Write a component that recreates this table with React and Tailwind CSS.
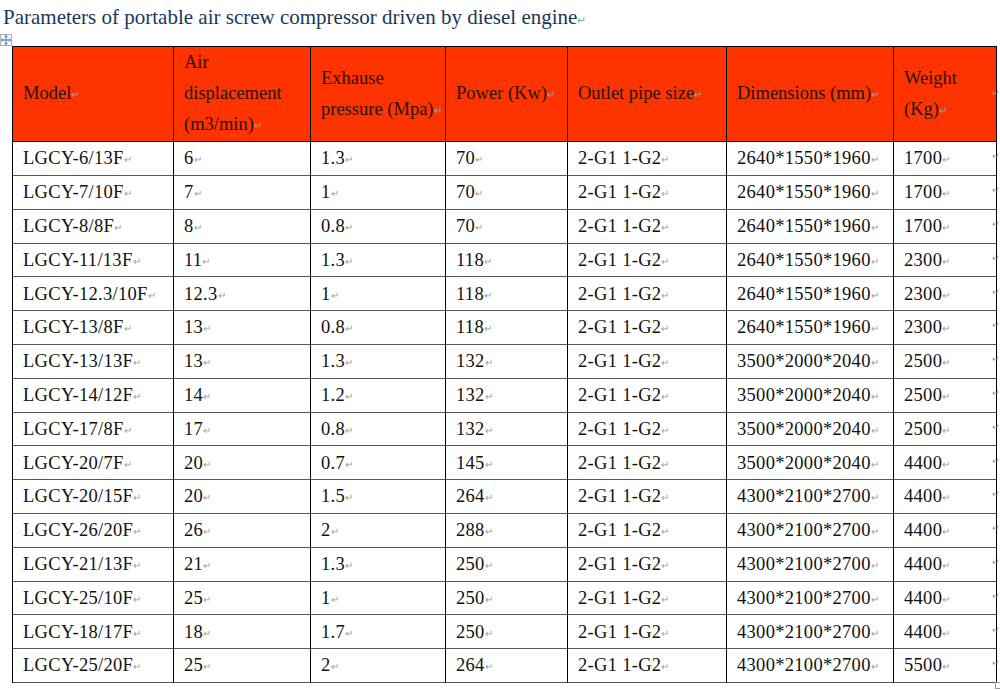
import React from "react";

const rows = [
  ["LGCY-6/13F", "6", "1.3", "70", "2640*1550*1960", "1700"],
  ["LGCY-7/10F", "7", "1", "70", "2640*1550*1960", "1700"],
  ["LGCY-8/8F", "8", "0.8", "70", "2640*1550*1960", "1700"],
  ["LGCY-11/13F", "11", "1.3", "118", "2640*1550*1960", "2300"],
  ["LGCY-12.3/10F", "12.3", "1", "118", "2640*1550*1960", "2300"],
  ["LGCY-13/8F", "13", "0.8", "118", "2640*1550*1960", "2300"],
  ["LGCY-13/13F", "13", "1.3", "132", "3500*2000*2040", "2500"],
  ["LGCY-14/12F", "14", "1.2", "132", "3500*2000*2040", "2500"],
  ["LGCY-17/8F", "17", "0.8", "132", "3500*2000*2040", "2500"],
  ["LGCY-20/7F", "20", "0.7", "145", "3500*2000*2040", "4400"],
  ["LGCY-20/15F", "20", "1.5", "264", "4300*2100*2700", "4400"],
  ["LGCY-26/20F", "26", "2", "288", "4300*2100*2700", "4400"],
  ["LGCY-21/13F", "21", "1.3", "250", "4300*2100*2700", "4400"],
  ["LGCY-25/10F", "25", "1", "250", "4300*2100*2700", "4400"],
  ["LGCY-18/17F", "18", "1.7", "250", "4300*2100*2700", "4400"],
  ["LGCY-25/20F", "25", "2", "264", "4300*2100*2700", "5500"],
];

// marca de párrafo de Word
const Mark = () => <span className="text-[10px] text-[#a0a0a0] align-middle">↵</span>;

const widths = ["w-[161px]", "w-[137px]", "w-[135px]", "w-[122px]", "w-[159px]", "w-[167px]", "w-[103px]"];

function HeadCell({ lines, i }) {
  return (
    <th className={`${widths[i]} border border-black bg-[#ff3300] pl-[10px] pr-0 text-left align-middle font-normal leading-[31px] text-[#2a1208]`}>
      {lines.map((l, k) => (
        <div key={k} className="whitespace-nowrap">
          {l}
          {k === lines.length - 1 && <Mark />}
        </div>
      ))}
    </th>
  );
}

const serif = "font-['Liberation_Serif','Times_New_Roman',serif]";

export default function App() {
  return (
    <div className={`relative min-h-[690px] w-[1000px] bg-white ${serif}`}>
      <div className={`h-[34px] pl-[3px] text-[21px] leading-[34px] text-[#1b365d] ${serif}`}>
        Parameters of portable air screw compressor driven by diesel engine
        <span className="text-[11px] text-[#a0a0a0]">↵</span>
      </div>

      {/* asa para mover la tabla */}
      <div className="absolute left-0 top-[34px] flex h-[12px] w-[12px] items-center justify-center border border-[#b0b0b0] bg-white">
        <svg width="10" height="10" viewBox="0 0 10 10" fill="none" stroke="#2a6fc0" strokeWidth="1">
          <path d="M5 0.5v9M0.5 5h9" />
          <path d="M3.5 2 5 0.5 6.5 2M3.5 8 5 9.5 6.5 8M2 3.5 0.5 5 2 6.5M8 3.5 9.5 5 8 6.5" />
        </svg>
      </div>

      <div className="relative ml-[12px] mt-[12px] w-[985px]">
        <table className={`table-fixed border-collapse text-[18.5px] ${serif}`}>
          <thead>
            <tr className="h-[94px]">
              <HeadCell i={0} lines={["Model"]} />
              <HeadCell i={1} lines={["Air", "displacement", "(m3/min)"]} />
              <HeadCell i={2} lines={["Exhause", "pressure (Mpa)"]} />
              <HeadCell i={3} lines={["Power (Kw)"]} />
              <HeadCell i={4} lines={["Outlet pipe size"]} />
              <HeadCell i={5} lines={["Dimensions (mm)"]} />
              <HeadCell i={6} lines={["Weight", "(Kg)"]} />
            </tr>
          </thead>
          <tbody>
            {rows.map((r, idx) => (
              <tr key={idx} className="h-[33.8px] border-b border-[#555]">
                {[r[0], r[1], r[2], r[3], "2-G1 1-G2", r[4], r[5]].map((v, i) => (
                  <td key={i} className="border-x border-black pl-[10px] align-middle leading-none tracking-[0.3px] text-[#111]">
                    {v}
                    <Mark />
                  </td>
                ))}
              </tr>
            ))}
          </tbody>
        </table>
        <div className="absolute -right-[3px] top-0 flex h-full flex-col text-[9px] leading-none text-[#999]">
          <div className="flex h-[94px] items-center">↵</div>
          {rows.map((_, i) => (
            <div key={i} className="flex h-[33.8px] items-center">↵</div>
          ))}
        </div>
        <div className="absolute -bottom-[6px] left-[983px] h-[7px] w-[7px] border border-[#999] bg-white" />
      </div>
    </div>
  );
}
